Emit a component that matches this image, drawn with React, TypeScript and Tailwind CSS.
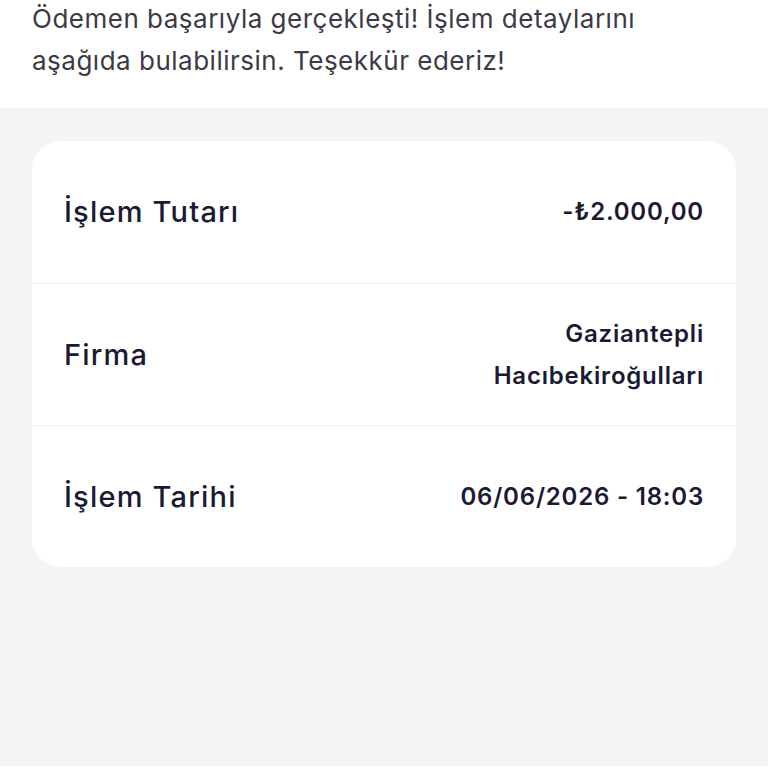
import React from 'react';

const ROWS = [
    { label: 'İşlem Tutarı', value: ['-₺2.000,00'] },
    { label: 'Firma', value: ['Gaziantepli', 'Hacıbekiroğulları'] },
    { label: 'İşlem Tarihi', value: ['06/06/2026 - 18:03'] },
];

const App: React.FC = () => {
    return (
        <div className="min-h-screen bg-[#f3f4f6]" style={{ fontFamily: 'Inter, "Noto Sans", sans-serif' }}>
            {/* Mesaj */}
            <div className="bg-white px-8 pb-[26px] -mt-[2px]">
                <p className="text-[26px] leading-[42px] text-[#3b3b47] tracking-[0.5px]">
                    Ödemen başarıyla gerçekleşti! İşlem detaylarını
                    <br />
                    aşağıda bulabilirsin. Teşekkür ederiz!
                </p>
            </div>

            {/* Detay kartı */}
            <div className="px-8 pt-[33px]">
                <div className="bg-white rounded-[28px] overflow-hidden">
                    {ROWS.map((row, i) => (
                        <div
                            key={row.label}
                            className={`h-[142px] flex items-center justify-between px-8 ${i > 0 ? 'border-t border-[#f1f2f4]' : ''}`}
                        >
                            <span className="text-[29px] font-medium tracking-[1.2px] text-[#1a1a33]">{row.label}</span>
                            <div className="text-right text-[24px] leading-[42px] font-semibold tracking-[0.8px] text-[#1a1a33]">
                                {row.value.map(v => (
                                    <div key={v}>{v}</div>
                                ))}
                            </div>
                        </div>
                    ))}
                </div>
            </div>
        </div>
    );
};

export default App;
